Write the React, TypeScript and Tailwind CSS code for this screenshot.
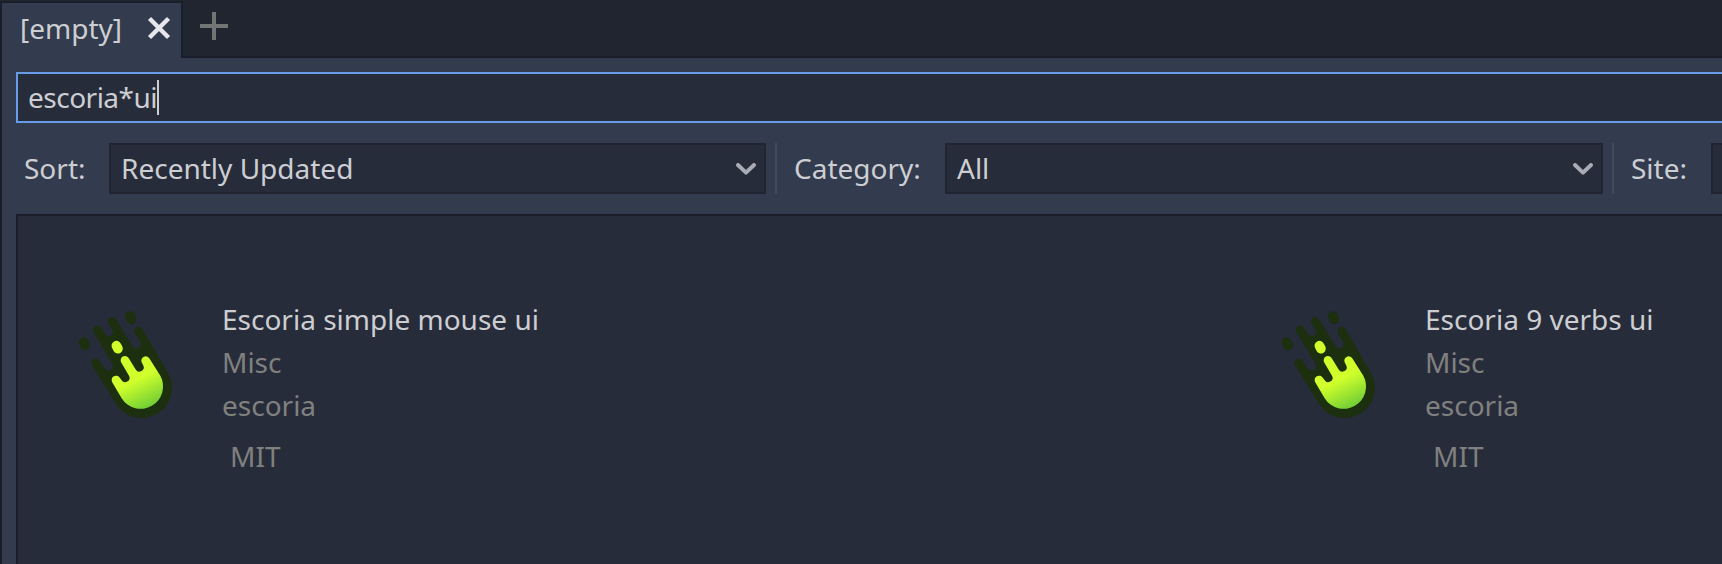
import React from "react";

function Chevron() {
  return (
    <svg width="20" height="12" viewBox="0 0 20 12" fill="none" stroke="#a9acb4" strokeWidth="3.9" strokeLinecap="round" strokeLinejoin="round">
      <path d="M2 2 L10 9.7 L18 2" />
    </svg>
  );
}

function Select({ value, width }: { value: string; width: string }) {
  return (
    <div className={`flex h-[51px] shrink-0 items-center justify-between border-2 border-[#202531] bg-[#272c3b] pl-[10px] pr-[8px] ${width}`}>
      <span className="pb-[2px]">{value}</span>
      <Chevron />
    </div>
  );
}

function Separator() {
  return <div className="ml-[9px] h-[51px] w-[2px] shrink-0 bg-[#434a5d]" />;
}

function Comet({ id }: { id: string }) {
  return (
    <svg className="shrink-0" width="130" height="140" viewBox="0 0 390 420">
      <defs>
        <linearGradient id={id} gradientUnits="userSpaceOnUse" x1="216" y1="276" x2="258" y2="362">
          <stop offset="0" stopColor="#d0ff2b" />
          <stop offset="1" stopColor="#6bcb36" />
        </linearGradient>
      </defs>
      <g fill="#1c2f0e">
        <path d="M95.700 225.500 A13 13 0 0 1 118.300 212.500 L134.600 235 A13 13 0 0 0 157.400 222 L100.700 126.500 A13 13 0 0 1 123.300 113.500 L134.600 132 A13 13 0 0 0 157.400 119 L145.700 100.500 A13 13 0 0 1 168.300 87.500 L217.700 168.500 A13 13 0 0 0 240.300 155.500 L224.700 129.500 A13 13 0 0 1 247.300 116.500 L324 248 A91 91 0 0 1 166 338.500 Z" />
        <rect x="58" y="141" width="30" height="40" rx="15" transform="rotate(-28 73 161)" />
        <rect x="197" y="63" width="30" height="40" rx="15" transform="rotate(-28 212 83)" />
      </g>
      <rect x="157" y="152" width="29" height="39" rx="14.5" fill="#d3ff2c" transform="rotate(-28 171.500 171.500)" />
      <path fill={`url(#${id})`} d="M156.700 276.500 A13 13 0 0 1 179.300 263.500 L184.500 270 A13 13 0 0 0 207 257 L183.700 217.500 A13 13 0 0 1 206.300 204.500 L227 238.500 A13 13 0 0 0 249.500 225.500 L245.700 218.500 A13 13 0 0 1 268.300 205.500 L301 257.500 A67 67 0 0 1 185 324.500 Z" />
    </svg>
  );
}

function AssetCard({ id, title }: { id: string; title: string }) {
  return (
    <article className="flex w-[1203px] shrink-0 pt-[74px]">
      <Comet id={id} />
      <div className="ml-[32px] pt-[8px] leading-[43px] text-[#80807f]">
        <h2 className="text-[#cdced2]">{title}</h2>
        <p>Misc</p>
        <p>escoria</p>
        <p className="mt-[8px] pl-[8px]">MIT</p>
      </div>
    </article>
  );
}

export default function App() {
  return (
    <div className="flex h-[564px] w-full flex-col overflow-hidden whitespace-nowrap bg-[#333b4f] font-['Noto_Sans',sans-serif] text-[28px] leading-[38px] text-[#cdced2]">
      <header className="flex h-[58px] shrink-0 bg-[#21252f]">
        <div className="mt-px flex w-[183px] items-center border-l-2 border-r-2 border-t-2 border-[#191e2a] bg-[#333b4f] pb-[5px] pl-[18px]">
          <span className="w-[127px]">[empty]</span>
          <svg width="24" height="24" viewBox="0 0 24 24" stroke="#e6e7ea" strokeWidth="4.4">
            <path d="M2.500 2.500 L21.500 21.500 M21.500 2.500 L2.500 21.500" />
          </svg>
        </div>
        <div className="flex flex-1 border-b-2 border-[#191e2a] pl-[17px] pt-[12px]">
          <svg width="28" height="28" viewBox="0 0 28 28" fill="#737475">
            <path d="M12 0h4v12h12v4H16v12h-4V16H0v-4h12z" />
          </svg>
        </div>
      </header>
      <main className="flex flex-1 flex-col border-l-2 border-[#191e2a] pl-[14px] pt-[14px]">
        <div className="flex h-[51px] shrink-0 items-center border-y-2 border-l-2 border-[#699ce8] bg-[#272c3b] pl-[10px]">
          <span className="pb-[2px] tracking-[-0.5px]">escoria*ui</span>
          <span className="h-[35px] w-[2px] bg-[#cdced2]" />
        </div>
        <div className="mt-[20px] flex h-[51px] shrink-0 items-center overflow-hidden">
          <span className="w-[93px] shrink-0 pb-[2px] pl-[8px]">Sort:</span>
          <Select value="Recently Updated" width="w-[657px]" />
          <Separator />
          <span className="w-[168px] shrink-0 pb-[2px] pl-[17px]">Category:</span>
          <Select value="All" width="w-[658px]" />
          <Separator />
          <span className="w-[97px] shrink-0 pb-[2px] pl-[17px]">Site:</span>
          <div className="h-[51px] flex-1 border-y-2 border-l-2 border-[#202531] bg-[#272c3b]" />
        </div>
        <section className="mt-[20px] flex flex-1 overflow-hidden border-l-2 border-t-2 border-[#191e2a] bg-[#272c3b] pl-[42px]">
          <AssetCard id="comet-mouse" title="Escoria simple mouse ui" />
          <AssetCard id="comet-verbs" title="Escoria 9 verbs ui" />
        </section>
      </main>
    </div>
  );
}
